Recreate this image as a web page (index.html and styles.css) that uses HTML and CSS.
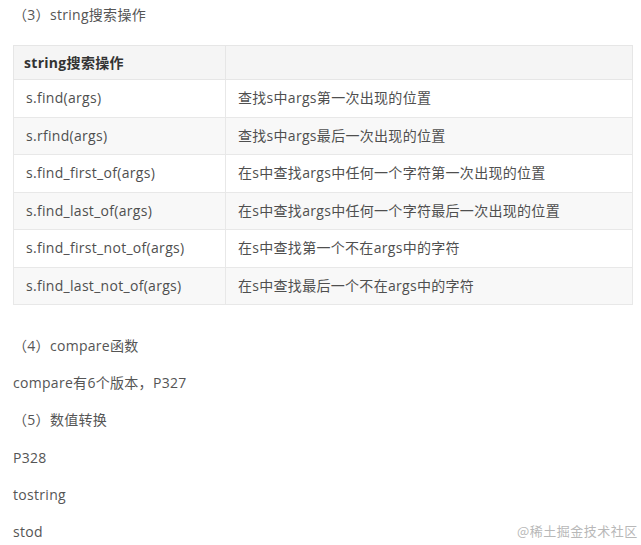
FILE: index.html
```html
<!DOCTYPE html>
<html>
<head>
	<meta charset="utf-8">
	<title>string搜索操作</title>
	<link rel="stylesheet" href="styles.css">
</head>
<body>

<div class="article">
	<p class="heading">（3）string搜索操作</p>

	<table class="op-table">
		<tr>
			<th>string搜索操作</th>
			<th></th>
		</tr>
		<tr>
			<td>s.find(args)</td>
			<td>查找s中args第一次出现的位置</td>
		</tr>
		<tr>
			<td>s.rfind(args)</td>
			<td>查找s中args最后一次出现的位置</td>
		</tr>
		<tr>
			<td>s.find_first_of(args)</td>
			<td>在s中查找args中任何一个字符第一次出现的位置</td>
		</tr>
		<tr>
			<td>s.find_last_of(args)</td>
			<td>在s中查找args中任何一个字符最后一次出现的位置</td>
		</tr>
		<tr>
			<td>s.find_first_not_of(args)</td>
			<td>在s中查找第一个不在args中的字符</td>
		</tr>
		<tr>
			<td>s.find_last_not_of(args)</td>
			<td>在s中查找最后一个不在args中的字符</td>
		</tr>
	</table>

	<p class="line first">（4）compare函数</p>
	<p class="line">compare有6个版本，P327</p>
	<p class="line">（5）数值转换</p>
	<p class="line">P328</p>
	<p class="line">tostring</p>
	<p class="line">stod</p>
</div>

<div class="watermark">@稀土掘金技术社区</div>

</body>
</html>
```

FILE: styles.css
```css
body {
	margin:0;
	background-color:#fff;
	font-family:"Open Sans", "Noto Sans CJK SC", sans-serif;
	font-size:14px;
	letter-spacing:0.3px;
	color:#555;
}

.article {
	padding:0 8px 0 13px;
}

.heading {
	margin:0 0 15px 0;
	line-height:30px;
}

.op-table {
	width:620px;
	border-collapse:collapse;
	color:#4f4f4f;
}

.op-table th {
	text-align:left;
	font-weight:bold;
	color:#333;
	background-color:#f5f5f5;
	line-height:33px;
	padding:0 10px;
	border:1px solid #e6e6e6;
}

.op-table th:first-child {
	width:191px;
}

.op-table td {
	line-height:36.5px;
	padding:0 12px;
	border:1px solid #e8e8e8;
	white-space:nowrap;
}

.op-table tr:nth-child(odd) td {
	background-color:#f8f8f8;
}

.line {
	margin:0;
	line-height:37.2px;
}

.line.first {
	margin-top:22px;
}

.watermark {
	position:absolute;
	left:517px;
	top:521px;
	font-family:"Noto Sans CJK SC", sans-serif;
	font-size:13px;
	letter-spacing:0.5px;
	color:#b8b8b8;
}
```
